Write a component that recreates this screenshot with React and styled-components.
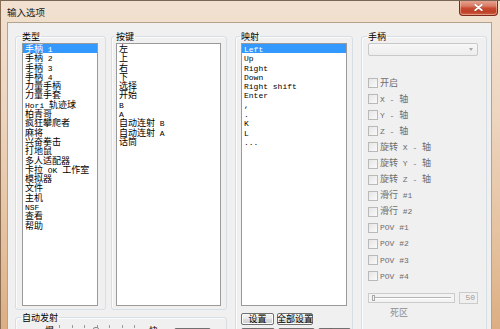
import React from 'react';
import styled, { createGlobalStyle } from 'styled-components';

const CJK = `"Noto Sans CJK SC", "Noto Sans CJK JP", sans-serif`;
const MONO = `"Liberation Mono", "DejaVu Sans Mono", monospace`;

const Global = createGlobalStyle`
  html, body { margin: 0; padding: 0; background: #fff; }
  body { font-family: ${CJK}; }
`;

const Window = styled.div`
  width: 500px;
  height: 329px;
  overflow: hidden;
  box-sizing: border-box;
  display: flex;
  flex-direction: column;
  border-top: 1px solid #7a6654;
  border-left: 1px solid #8a6e56;
  background: linear-gradient(180deg, #f2e1d1 0%, #edd5bf 35%, #e4c09c 75%, #dcae82 100%);
`;

const TitleBar = styled.div`
  height: 21px;
  flex: none;
  display: flex;
  align-items: flex-start;
  justify-content: space-between;
  padding: 0 2px 0 6px;
`;

const Title = styled.span`
  font: 9.5px/10px ${CJK};
  color: #1b1b1b;
  margin-top: 6px;
`;

const CloseBtn = styled.div`
  width: 39px;
  height: 16px;
  margin-top: -1px;
  box-sizing: border-box;
  border: 1px solid #7e2b1d;
  border-top: none;
  border-radius: 0 0 4px 4px;
  background: linear-gradient(180deg, #e9a898 0%, #d97c64 40%, #c84a30 55%, #bd3f26 80%, #d06a4c 100%);
  box-shadow: inset 0 0 0 1px rgba(255, 220, 200, 0.45);
  display: flex;
  align-items: center;
  justify-content: center;
`;

const Body = styled.div`
  flex: 1;
  display: flex;
  padding: 0 8px 0 6px;
  min-height: 0;
`;

const Client = styled.div`
  flex: 1;
  display: flex;
  align-items: flex-start;
  background: #f0f0f0;
  border: 1px solid #b6a18b;
  border-bottom: none;
  padding: 9px 4px 0 7px;
  min-width: 0;
`;

const LeftBlock = styled.div`
  width: 212px;
  flex: none;
  display: flex;
  flex-direction: column;
`;

const TopRow = styled.div`
  display: flex;
  gap: 5px;
`;

const Group = styled.fieldset`
  margin: 0;
  margin-left: ${p => p.$ml || 0}px;
  margin-top: ${p => p.$mt || 0}px;
  padding: 2px ${p => p.$pr}px ${p => p.$pb ?? 3}px ${p => p.$pl}px;
  width: ${p => p.$w}px;
  flex: none;
  box-sizing: border-box;
  min-width: 0;
  border: 1px solid #d5dfe5;
  border-radius: 3px;
  box-shadow: inset 1px 1px 0 #fbfbfb;
`;

const Legend = styled.legend`
  padding: 0 1px;
  margin-left: -1px;
  font: 9px/9px ${CJK};
  color: #000;
`;

const ListBox = styled.div`
  width: ${p => p.$w}px;
  height: 263px;
  box-sizing: border-box;
  border: 1px solid #9a9a9a;
  background: #fff;
  overflow: hidden;
`;

const Item = styled.div`
  height: 9.3px;
  line-height: 9.3px;
  font-size: 9px;
  font-family: ${CJK};
  white-space: nowrap;
  padding-left: 2px;
  background: ${p => (p.$sel ? '#3399ff' : 'transparent')};
  color: ${p => (p.$sel ? '#fff' : '#000')};
`;

const Latin = styled.span`
  font-family: ${MONO};
  font-size: 8px;
`;

const Combo = styled.div`
  width: 110px;
  height: 13px;
  box-sizing: border-box;
  border: 1px solid #c9c9c9;
  border-radius: 2px;
  background: linear-gradient(180deg, #f7f7f7, #ededed);
  display: flex;
  align-items: center;
  justify-content: flex-end;
  padding-right: 4px;
`;

const Arrow = styled.span`
  width: 0;
  height: 0;
  border-left: 2.5px solid transparent;
  border-right: 2.5px solid transparent;
  border-top: 3px solid #a8a8a8;
`;

const CheckList = styled.div`
  display: flex;
  flex-direction: column;
  margin-top: 19px;
`;

const CheckRow = styled.div`
  height: 16.1px;
  display: flex;
  align-items: center;
  gap: 2px;
  font: 9px/10px ${CJK};
  color: #6d6d6d;
  white-space: nowrap;
`;

const Box = styled.span`
  width: 10px;
  height: 10px;
  flex: none;
  box-sizing: border-box;
  border: 1px solid #b9b9b9;
  background: linear-gradient(135deg, #e6e6e6, #fafafa);
`;

const SliderRow = styled.div`
  display: flex;
  align-items: center;
  gap: 4px;
  margin-top: 8px;
`;

const Track = styled.div`
  width: 87px;
  height: 10px;
  box-sizing: border-box;
  border: 1px solid #cbcbcb;
  background: #f3f3f3;
  display: flex;
  align-items: center;
  padding: 0 3px;
  position: relative;
`;

const Groove = styled.div`
  flex: 1;
  height: 1px;
  background: #b4b4b4;
  border-bottom: 1px solid #fff;
`;

const Thumb = styled.div`
  position: absolute;
  left: 3px;
  top: 1px;
  width: 3px;
  height: 6px;
  box-sizing: border-box;
  border: 1px solid #a8a8a8;
  background: #f6f6f6;
`;

const Edit = styled.div`
  width: 19px;
  height: 12px;
  box-sizing: border-box;
  border: 1px solid #cbcbcb;
  background: #f0f0f0;
  font: 8px/10px ${MONO};
  color: #9c9c9c;
  text-align: right;
  padding-right: 2px;
`;

const Caption = styled.div`
  font: 9px/10px ${CJK};
  color: #8d8d8d;
  margin: 4px 0 0 22px;
`;

const BtnRow = styled.div`
  display: flex;
  gap: ${p => p.$gap || 3}px;
  margin-top: ${p => p.$mt}px;
  margin-left: ${p => p.$ml || 0}px;
`;

const Btn = styled.div`
  width: ${p => p.$w}px;
  height: 12px;
  flex: none;
  box-sizing: border-box;
  border: 1px solid #707070;
  border-radius: 2px;
  background: linear-gradient(180deg, #f3f3f3 0%, #ebebeb 45%, #dddddd 50%, #cfcfcf 100%);
  box-shadow: inset 0 0 0 1px #fcfcfc;
  font: 9px/10px ${CJK};
  color: #000;
  display: flex;
  align-items: center;
  justify-content: center;
  white-space: nowrap;
`;

const FireRow = styled.div`
  display: flex;
  align-items: flex-start;
  height: 12px;
`;

const SpeedLabel = styled.span`
  font: 9px/10px ${CJK};
  color: #000;
  margin-left: ${p => p.$ml}px;
  margin-top: 2px;
`;

const TickTrack = styled.div`
  width: 76px;
  margin-left: ${p => p.$ml}px;
  position: relative;
  display: flex;
  justify-content: space-between;
  padding-top: 1px;
`;

const Tick = styled.span`
  width: 1px;
  height: 3px;
  background: #9a9a9a;
`;

const FireThumb = styled.span`
  position: absolute;
  left: 34px;
  top: 3px;
  width: 6px;
  height: 8px;
  box-sizing: border-box;
  border: 1px solid #8a8a8a;
  border-radius: 2px 2px 0 0;
  background: #e8e8e8;
`;

const isCJK = s => /[\u3000-\u9fff\uff00-\uffef]/.test(s);

function Mixed({ text }) {
  const parts = text.split(/([\u3000-\u9fff\uff00-\uffef]+)/).filter(Boolean);
  return parts.map((p, i) => (isCJK(p) ? <span key={i}>{p}</span> : <Latin key={i}>{p}</Latin>));
}

const types = ['手柄 1', '手柄 2', '手柄 3', '手柄 4', '力量手柄', '力量手套', 'Hori 轨迹球', '柏青哥', '疯狂攀爬者', '麻将', '兴奋拳击', '打地鼠', '多人适配器', '卡拉 OK 工作室', '模拟器', '文件', '主机', 'NSF', '查看', '帮助'];
const keys = ['左', '上', '右', '下', '选择', '开始', 'B', 'A', '自动连射 B', '自动连射 A', '话筒'];
const maps = ['Left', 'Up', 'Right', 'Down', 'Right shift', 'Enter', ',', '.', 'K', 'L', '...'];
const checks = ['开启', 'X - 轴', 'Y - 轴', 'Z - 轴', '旋转 X - 轴', '旋转 Y - 轴', '旋转 Z - 轴', '滑行 #1', '滑行 #2', 'POV #1', 'POV #2', 'POV #3', 'POV #4'];

function List({ items, w, sel }) {
  return (
    <ListBox $w={w}>
      {items.map((t, i) => (
        <Item key={i} $sel={i === sel}>
          <Mixed text={t} />
        </Item>
      ))}
    </ListBox>
  );
}

export default function App() {
  return (
    <>
      <Global />
      <Window>
        <TitleBar>
          <Title>输入选项</Title>
          <CloseBtn>
            <svg width="9" height="7" viewBox="0 0 9 7">
              <path d="M1 0.5 L8 6.5 M8 0.5 L1 6.5" stroke="#5a1a10" strokeWidth="2.6" strokeLinecap="round" opacity="0.35" />
              <path d="M1.2 0.8 L7.8 6.2 M7.8 0.8 L1.2 6.2" stroke="#fff" strokeWidth="1.8" strokeLinecap="round" />
            </svg>
          </CloseBtn>
        </TitleBar>
        <Body>
          <Client>
            <LeftBlock>
              <TopRow>
                <Group $w={91} $pl={6} $pr={7}>
                  <Legend>类型</Legend>
                  <List items={types} w={76} sel={0} />
                </Group>
                <Group $w={116} $pl={4} $pr={5}>
                  <Legend>按键</Legend>
                  <List items={keys} w={105} sel={-1} />
                </Group>
              </TopRow>
              <Group $w={212} $pl={6} $pr={6} $mt={3} $pb={0}>
                <Legend>自动发射</Legend>
                <FireRow>
                  <SpeedLabel $ml={23}>慢</SpeedLabel>
                  <TickTrack $ml={5}>
                    {Array.from({ length: 7 }).map((_, i) => (
                      <Tick key={i} />
                    ))}
                    <FireThumb />
                  </TickTrack>
                  <SpeedLabel $ml={14}>快</SpeedLabel>
                  <BtnRow $mt={4} $ml={16}>
                    <Btn $w={37}>设置</Btn>
                  </BtnRow>
                </FireRow>
              </Group>
            </LeftBlock>

            <Group $w={118} $pl={5} $pr={5} $ml={8} $pb={0}>
              <Legend>映射</Legend>
              <List items={maps} w={106} sel={0} />
              <BtnRow $mt={7}>
                <Btn $w={33}>设置</Btn>
                <Btn $w={36}>全部设置</Btn>
              </BtnRow>
              <BtnRow $mt={3}>
                <Btn $w={34}>载入</Btn>
                <Btn $w={37}>保存</Btn>
                <Btn $w={33}>清除</Btn>
              </BtnRow>
            </Group>

            <Group $w={126} $pl={6} $pr={8} $ml={8} $pb={0}>
              <Legend>手柄</Legend>
              <Combo>
                <Arrow />
              </Combo>
              <CheckList>
                {checks.map((c, i) => (
                  <CheckRow key={i}>
                    <Box />
                    <span>
                      <Mixed text={c} />
                    </span>
                  </CheckRow>
                ))}
              </CheckList>
              <SliderRow>
                <Track>
                  <Groove />
                  <Thumb />
                </Track>
                <Edit>50</Edit>
              </SliderRow>
              <Caption>死区</Caption>
              <BtnRow $mt={11} $ml={2} $gap={16}>
                <Btn $w={47}>确定</Btn>
                <Btn $w={47}>取消</Btn>
              </BtnRow>
            </Group>
          </Client>
        </Body>
      </Window>
    </>
  );
}
